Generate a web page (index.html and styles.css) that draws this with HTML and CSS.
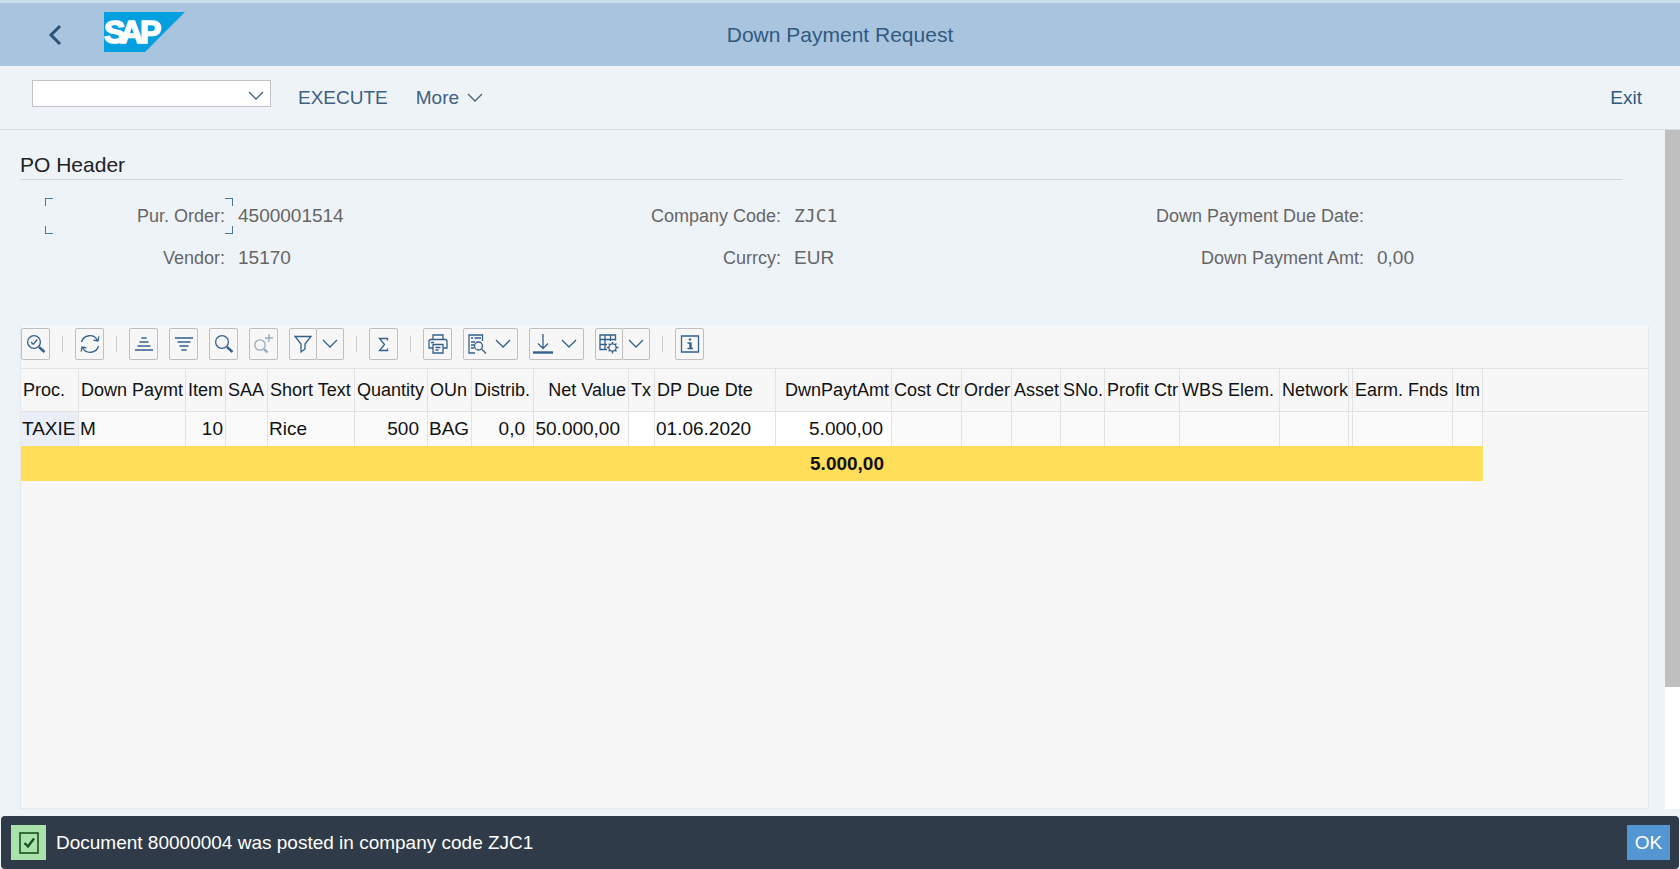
FILE: index.html
```html
<!DOCTYPE html>
<html lang="en">
<head>
<meta charset="utf-8">
<title>Down Payment Request</title>
<link rel="stylesheet" href="styles.css">
</head>
<body>
<div class="app">
  <header class="shell">
    <div class="shell-start">
      <button class="back" type="button" aria-label="Back">
        <svg width="14" height="22" viewBox="0 0 14 22"><path d="M12 2 3 11l9 9" fill="none" stroke="#2b5175" stroke-width="3"/></svg>
      </button>
      <svg class="logo" width="81" height="40" viewBox="0 0 81 40" role="img" aria-label="SAP">
        <path d="M0 0h81L41 40H0z" fill="#049fdf"/>
        <text class="logo-text" x="0 16 36" y="31">SAP</text>
      </svg>
    </div>
    <h1 class="title">Down Payment Request</h1>
    <div class="shell-end"></div>
  </header>

  <nav class="menu">
    <div class="combo">
      <input class="combo-input" type="text" aria-label="Command">
      <button class="combo-button" type="button" aria-label="Show commands"><svg class="chevron" width="16" height="10" viewBox="0 0 16 10"><path d="m1 1 7 7 7-7"/></svg></button>
    </div>
    <button class="menu-item execute" type="button">EXECUTE</button>
    <button class="menu-item more" type="button">More <svg class="chevron" width="16" height="10" viewBox="0 0 16 10"><path d="m1 1 7 7 7-7"/></svg></button>
    <button class="menu-item exit" type="button">Exit</button>
  </nav>

  <div class="body">
    <main class="content">
      <h2 class="section-title">PO Header</h2>
      <dl class="fields">
        <dt class="focused">Pur. Order:<i class="corner tl"></i><i class="corner tr"></i><i class="corner bl"></i><i class="corner br"></i></dt><dd>4500001514</dd>
        <dt>Company Code:</dt><dd class="mono">ZJC1</dd>
        <dt>Down Payment Due Date:</dt><dd></dd>
        <dt>Vendor:</dt><dd>15170</dd>
        <dt>Currcy:</dt><dd>EUR</dd>
        <dt>Down Payment Amt:</dt><dd>0,00</dd>
      </dl>

      <section class="grid">
        <div class="tools">
          <button class="tool" type="button" aria-label="Details"><svg width="20" height="20" viewBox="0 0 20 20"><circle cx="8" cy="8" r="6.4"/><path d="m5 8 2.2 2.3L11.3 5.5"/><path class="heavy" d="m13 13 5.5 5"/></svg></button>
          <span class="sep"></span>
          <button class="tool" type="button" aria-label="Refresh"><svg width="20" height="20" viewBox="0 0 20 20"><path d="M1.500 8A8.600 8.600 0 0 1 17.500 6.500M18.500 12A8.600 8.600 0 0 1 2.500 13.500M18.800 2.500 18 7l-4.500-.8M1.200 17.500 2 13l4.500.8"/></svg></button>
          <span class="sep"></span>
          <button class="tool" type="button" aria-label="Sort ascending"><svg width="20" height="20" viewBox="0 0 20 20"><path class="bars" d="M7.500 4h5M5.500 8h9M3.500 12h13M1 16h18"/></svg></button>
          <button class="tool" type="button" aria-label="Sort descending"><svg width="20" height="20" viewBox="0 0 20 20"><path class="bars" d="M1 4h18M3.500 8h13M5.500 12h9M7.500 16h5"/></svg></button>
          <button class="tool" type="button" aria-label="Find"><svg width="20" height="20" viewBox="0 0 20 20"><circle cx="8" cy="8" r="6.4"/><path class="heavy" d="m13 13 5.5 5"/></svg></button>
          <button class="tool" type="button" aria-label="Find next" disabled><svg width="20" height="20" viewBox="0 0 20 20"><circle cx="6" cy="11" r="5.2"/><path d="M15 0v8M11 4h8"/><path class="heavy" d="m10 15 3.500 3.500"/></svg></button>
          <span class="split">
            <button class="tool" type="button" aria-label="Filter"><svg width="20" height="20" viewBox="0 0 20 20"><path d="M2 2.500h16L12 10v5l-4 3v-8z"/></svg></button>
            <button class="tool" type="button" aria-label="Filter options"><svg class="chevron" width="16" height="10" viewBox="0 0 16 10"><path d="m1 1 7 7 7-7"/></svg></button>
          </span>
          <span class="sep"></span>
          <button class="tool" type="button" aria-label="Total"><svg width="20" height="20" viewBox="0 0 20 20"><path d="M13.500 6.500v-2H5.500l5 6-5 6h8v-2"/></svg></button>
          <span class="sep"></span>
          <button class="tool" type="button" aria-label="Print"><svg width="20" height="20" viewBox="0 0 20 20"><path d="M5 5V1h10v4M5 14H1V7.500Q1 5.500 3 5.500h14q2 0 2 2V14h-4M3 8.500h3"/><path d="M5 10.500h10V19H5zM7.500 13.500h5M7.500 16h3"/></svg></button>
          <button class="tool wide" type="button" aria-label="Views"><svg width="20" height="20" viewBox="0 0 20 20"><path d="M15.500 7V1H2v18h6"/><path class="bars" d="M4 4h2M7.500 4H14"/><path d="M4 8h4M4 11h3M4 14h3"/><circle cx="11.500" cy="12" r="4"/><path d="m14.500 15 4.500 4.500"/></svg><svg class="chevron" width="16" height="10" viewBox="0 0 16 10"><path d="m1 1 7 7 7-7"/></svg></button>
          <button class="tool wide" type="button" aria-label="Export"><svg width="20" height="20" viewBox="0 0 20 20"><path d="M10 0v14M5 9.500l5 5 5-5"/><path class="heavy" d="M0 18.500h20"/></svg><svg class="chevron" width="16" height="10" viewBox="0 0 16 10"><path d="m1 1 7 7 7-7"/></svg></button>
          <span class="split">
            <button class="tool" type="button" aria-label="Layout"><svg width="20" height="20" viewBox="0 0 20 20"><path d="M16.500 6.500V1H1v14.500h7M1 5.500h15.500M1 10.500h7M6 1v14.500M11.500 1v6"/><circle cx="13.500" cy="13.500" r="3.600"/><path d="M13.500 8v2M13.500 17v2.500M8 13.500h2M17 13.500h2.500M9.600 9.600 11 11M16 16l1.500 1.500M9.600 17.400 11 16M16 11l1.500-1.400"/></svg></button>
            <button class="tool" type="button" aria-label="Layout options"><svg class="chevron" width="16" height="10" viewBox="0 0 16 10"><path d="m1 1 7 7 7-7"/></svg></button>
          </span>
          <span class="sep"></span>
          <button class="tool" type="button" aria-label="Information"><svg width="20" height="20" viewBox="0 0 20 20"><path d="M1.500 2h17v16h-17z"/><path class="heavy" d="M10 4.500v2M10.500 8.500v6"/><path d="M7.500 9h3M7.500 14.500h5.500"/></svg></button>
        </div>
        <table class="items">
          <colgroup>
            <col class="c-proc"><col class="c-dp"><col class="c-item"><col class="c-saa"><col class="c-text"><col class="c-qty"><col class="c-oun"><col class="c-dist"><col class="c-net"><col class="c-tx"><col class="c-due"><col class="c-amt"><col class="c-cost"><col class="c-order"><col class="c-asset"><col class="c-sno"><col class="c-profit"><col class="c-wbs"><col class="c-netw"><col class="c-gap"><col class="c-earm"><col class="c-itm"><col>
          </colgroup>
          <thead>
            <tr><th>Proc.</th><th>Down Paymt</th><th>Item</th><th>SAA</th><th>Short Text</th><th>Quantity</th><th>OUn</th><th>Distrib.</th><th class="right">Net Value</th><th>Tx</th><th>DP Due Dte</th><th class="right">DwnPaytAmt</th><th>Cost Ctr</th><th>Order</th><th>Asset</th><th>SNo.</th><th>Profit Ctr</th><th>WBS Elem.</th><th>Network</th><th></th><th>Earm. Fnds</th><th>Itm</th><th class="rest"></th></tr>
          </thead>
          <tbody>
            <tr><td class="key">TAXIE</td><td>M</td><td class="right">10</td><td></td><td>Rice</td><td class="num">500</td><td>BAG</td><td class="num">0,0</td><td class="num">50.000,00</td><td class="edit"></td><td class="edit">01.06.2020</td><td class="num edit">5.000,00</td><td></td><td></td><td></td><td></td><td></td><td></td><td></td><td></td><td></td><td></td><td class="rest"></td></tr>
            <tr class="total"><td colspan="11"></td><td class="num">5.000,00</td><td colspan="10"></td><td class="rest"></td></tr>
          </tbody>
        </table>
      </section>
    </main>
    <div class="scroll"><div class="thumb"></div></div>
  </div>

  <footer class="status">
    <span class="status-icon"><svg width="20" height="22" viewBox="0 0 20 22"><rect x="1" y="1" width="18" height="20"/><path d="m5.500 11 3.500 3.500 6-8"/></svg></span>
    <span class="message" role="status">Document 80000004 was posted in company code ZJC1</span>
    <button class="ok" type="button">OK</button>
  </footer>
</div>
</body>
</html>
```

FILE: styles.css
```css
* { box-sizing: border-box; }

body {
  margin: 0;
  font-family: "Liberation Sans", Arial, sans-serif;
  font-size: 19px;
  line-height: 22px;
  color: #111;
  background: #eef3f8;
}

button, input { font: inherit; color: inherit; }
button { margin: 0; padding: 0; border: 0; background: none; }
svg { display: block; flex: none; }

.app { display: flex; flex-direction: column; min-height: 100vh; }

.shell {
  display: grid;
  grid-template-columns: 1fr auto 1fr;
  align-items: center;
  height: 66px;
  border-top: 3px solid #cadded;
  background: #a9c4de;
}
.shell-start { display: flex; align-items: center; gap: 42px; padding: 0 0 6px 48px; }
.back { padding-top: 6px; }
.logo-text { font-family: "Liberation Sans", Arial, sans-serif; font-size: 32px; font-weight: 700; fill: #fff; stroke: #fff; stroke-width: 1.6; }
.title { margin: 0; font-size: 21px; font-weight: 400; color: #31597f; }

.menu {
  display: flex;
  align-items: center;
  height: 64px;
  padding: 0 38px 0 32px;
  border-bottom: 1px solid #d3dde8;
  color: #3f617f;
}
.combo {
  display: flex;
  width: 239px;
  height: 27px;
  margin-bottom: 8px;
  border: 1px solid #bfc3c7;
  background: #fff;
}
.combo-input { flex: 1; min-width: 0; padding: 0 6px; border: 0; outline: 0; background: none; }
.combo-button { display: flex; align-items: center; padding: 4px 6px 0; }
.chevron { fill: none; stroke: #46617a; stroke-width: 1.3; }
.menu-item { display: flex; align-items: center; gap: 8px; }
.execute { margin-left: 27px; }
.more { margin-left: 28px; }
.exit { margin-left: auto; color: #31597f; }

.body { display: flex; flex: 1; padding-bottom: 7px; }
.content { display: flex; flex: 1; flex-direction: column; min-width: 0; padding: 24px 16px 0 20px; }
.scroll { width: 15px; background: #fff; }
.thumb { height: 82%; background: #bfbfbf; }

.section-title {
  margin: 0 27px 0 0;
  padding-bottom: 3px;
  border-bottom: 1px solid #cfd8e1;
  font-size: 21px;
  font-weight: 400;
  color: #222;
}
.fields {
  display: grid;
  grid-template-columns: 188fr 324fr 232fr 324fr 259fr 277fr;
  gap: 6px 0;
  margin: 18px 0 50px;
  padding-left: 25px;
  line-height: 36px;
  color: #666;
}
.fields dt { padding-right: 8px; text-align: right; white-space: nowrap; font-size: 18px; }
.fields dd { height: 36px; margin: 0; padding-left: 5px; }
.fields .mono { font-family: "DejaVu Sans Mono", monospace; font-size: 18px; }
.focused { position: relative; }
.corner { position: absolute; width: 8px; height: 8px; border: 0 solid #4b7695; }
.tl { top: 0; left: 0; border-width: 1px 0 0 1px; }
.tr { top: 0; right: 0; border-width: 1px 1px 0 0; }
.bl { bottom: 0; left: 0; border-width: 0 0 1px 1px; }
.br { bottom: 0; right: 0; border-width: 0 1px 1px 0; }

.grid { flex: 1; border: 1px solid #e6e9eb; border-top: 0; background: #f7f7f7; }
.tools { display: flex; align-items: center; gap: 11px; height: 42px; padding-bottom: 6px; }
.tool {
  display: flex;
  align-items: center;
  justify-content: center;
  width: 29px;
  height: 32px;
  border: 1px solid #bfbfbf;
  border-radius: 2px;
}
.tool svg { fill: none; stroke: #35608a; stroke-width: 1.3; }
.tool .heavy { stroke-width: 2.4; }
.tool .bars { stroke-width: 1.5; }
.tool:disabled svg { opacity: 0.5; }
.wide { justify-content: space-between; width: 55px; padding: 0 6px 0 3px; }
.split { display: flex; }
.split .tool { width: 28px; }
.split .tool + .tool { margin-left: -1px; }
.sep { width: 1px; height: 16px; margin: 0 1px; background: #ccc; }

.items { width: 100%; table-layout: fixed; border-collapse: separate; border-spacing: 0; }
.items th, .items td { border-right: 1px solid #e2e2e2; text-align: left; white-space: nowrap; }
.items th {
  height: 44px;
  padding: 0 0 0 2px;
  border-top: 1px solid #e2e2e2;
  border-bottom: 1px solid #e2e2e2;
  font-size: 18px;
  font-weight: 400;
}
.items td { height: 34px; padding: 0 0 0 1px; background: #fafafa; }
.items .right { padding-right: 2px; text-align: right; }
.items .num { padding-right: 8px; text-align: right; }
.items .key { background: #e9eef7; }
.items .edit { background: #fff; }
.items .total td { height: 35px; border-right: 0; background: #ffde59; font-weight: 700; }
.items .rest, .items .total .rest { border-right: 0; background: none; }
.c-proc { width: 58px; }
.c-dp { width: 107px; }
.c-item { width: 40px; }
.c-saa { width: 42px; }
.c-text { width: 87px; }
.c-qty { width: 73px; }
.c-oun { width: 44px; }
.c-dist { width: 62px; }
.c-net { width: 95px; }
.c-tx { width: 26px; }
.c-due { width: 121px; }
.c-amt { width: 116px; }
.c-cost { width: 70px; }
.c-order { width: 50px; }
.c-asset { width: 49px; }
.c-sno { width: 44px; }
.c-profit { width: 75px; }
.c-wbs { width: 100px; }
.c-netw { width: 69px; }
.c-gap { width: 4px; }
.c-earm { width: 100px; }
.c-itm { width: 30px; }

.status {
  display: flex;
  align-items: center;
  gap: 10px;
  height: 53px;
  margin: 0 1px;
  padding: 0 9px 0 10px;
  border-radius: 4px;
  background: #2f3b48;
  color: #fff;
}
.status-icon { display: flex; align-items: center; justify-content: center; width: 35px; height: 35px; background: #abe2ab; }
.status-icon svg { fill: none; stroke: #14501f; stroke-width: 1.6; }
.status-icon path { stroke-width: 2.4; }
.message { flex: 1; }
.ok { width: 43px; height: 35px; background: #5496d2; }
```
